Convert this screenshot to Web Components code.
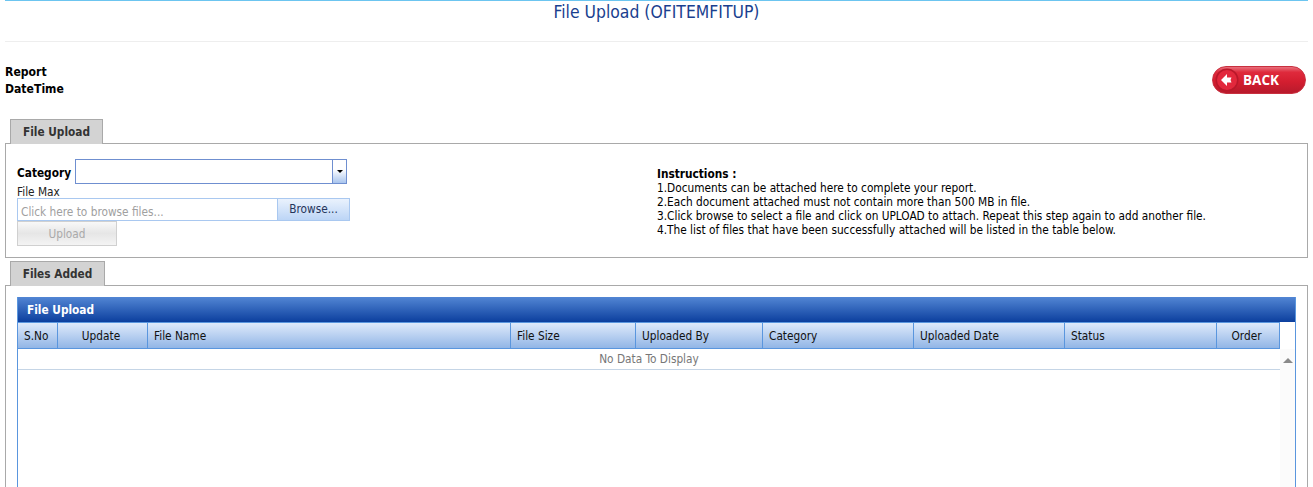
<!DOCTYPE html>
<html>
<head>
<meta charset="utf-8">
<title>File Upload</title>
<style>
  html, body { margin: 0; height: 487px; overflow: hidden; background: #fff; }
  body { padding: 0 5px; font: 11.75px/13px "DejaVu Sans Condensed", "Liberation Sans", sans-serif; color: #000; }
</style>
</head>
<body>
<page-title>File Upload (OFITEMFITUP)</page-title>
<report-head></report-head>
<tab-panel label="File Upload" tabwidth="93" height="115"><upload-form></upload-form></tab-panel>
<tab-panel label="Files Added" tabwidth="95" height="202" gap="3" cut><data-grid title="File Upload"></data-grid></tab-panel>

<script>
class PageTitle extends HTMLElement {
  constructor() {
    super();
    this.attachShadow({ mode: "open" });
    this.shadowRoot.innerHTML = `<style>
      :host { display: block; height: 40px; border-top: 1px solid #6cc5f0; border-bottom: 1px solid #eee; }
      div { text-align: center; color: #1a3f8f; font-size: 17.4px; line-height: 22px; }
    </style><div><slot></slot></div>`;
  }
}
customElements.define("page-title", PageTitle);

class BackButton extends HTMLElement {
  constructor() {
    super();
    this.attachShadow({ mode: "open" });
    this.shadowRoot.innerHTML = `<style>
      :host { display: block; width: 94px; height: 28px; }
      .btn { box-sizing: border-box; height: 28px; border-radius: 14px; display: flex; align-items: center; gap: 4px; padding-left: 2px;
        border: 1px solid #c9303f; background: linear-gradient(#e8707c 0, #df2a3c 20%, #d41e30 55%, #b81a2c 100%); color: #fff;
        font: bold 13.5px "Open Sans", sans-serif; }
      svg { display: block; flex: none; }
    </style>
    <div class="btn">
      <svg width="24" height="24" viewBox="0 0 24 24">
        <circle cx="12" cy="12" r="11.5" fill="#b9182a"/>
        <circle cx="12" cy="12" r="10" fill="#e2283c"/>
        <path d="M6 12 L12 6 V9.5 H16.5 L15.5 12 L16.5 14.5 H12 V18 Z" fill="#fff"/>
      </svg>
      <span>BACK</span>
    </div>`;
  }
}
customElements.define("back-button", BackButton);

class ReportHead extends HTMLElement {
  constructor() {
    super();
    this.attachShadow({ mode: "open" });
    this.shadowRoot.innerHTML = `<style>
      :host { display: flex; justify-content: space-between; height: 77px; }
      .lbl { font-size: 12.1px; font-weight: bold; line-height: 17px; padding-top: 22px; }
      .right { padding: 24px 2px 0 0; }
    </style>
    <div class="lbl">Report<br>DateTime</div>
    <div class="right"><back-button></back-button></div>`;
  }
}
customElements.define("report-head", ReportHead);

class TabPanel extends HTMLElement {
  constructor() {
    super();
    this.attachShadow({ mode: "open" });
  }
  connectedCallback() {
    const label = this.getAttribute("label") || "";
    const tabwidth = this.getAttribute("tabwidth") || "90";
    const height = this.getAttribute("height") || "100";
    const gap = this.getAttribute("gap") || "0";
    // cut: the panel runs on past the fold, so no bottom edge
    const bottom = this.hasAttribute("cut") ? "0" : "1px solid #a9a9a9";
    this.shadowRoot.innerHTML = `<style>
      :host { display: block; margin-top: ${gap}px; }
      .tab { box-sizing: border-box; width: ${tabwidth}px; height: 25px; margin-left: 5px; margin-bottom: -1px; position: relative;
        background: #d3d3d3; border: 1px solid #a9a9a9; border-bottom: 0; color: #333; font-weight: bold;
        text-align: center; line-height: 24px; }
      .body { box-sizing: border-box; width: 1303px; height: ${height}px; border: 1px solid #a9a9a9; border-bottom: ${bottom}; padding: 11px 11px 0; }
    </style>
    <div class="tab">${label}</div>
    <div class="body"><slot></slot></div>`;
  }
}
customElements.define("tab-panel", TabPanel);

class UploadForm extends HTMLElement {
  constructor() {
    super();
    this.attachShadow({ mode: "open" });
    this.shadowRoot.innerHTML = `<style>
      :host { display: grid; grid-template-columns: 640px 1fr; }
      .cat { display: flex; align-items: center; height: 25px; margin-top: 4px; }
      .cat b { width: 58px; flex: none; padding-top: 4px; }
      .select { box-sizing: border-box; width: 272px; height: 25px; border: 1px solid #6f8fd0; display: flex; justify-content: flex-end; background: #fff; }
      .arrow { width: 13px; border-left: 1px solid #6f8fd0; background: linear-gradient(#fff 40%, #a9c5ee); display: flex; align-items: center; justify-content: center; }
      .arrow i { width: 0; height: 0; border: 3px solid transparent; border-top: 3px solid #000; border-bottom: 0; }
      .max { line-height: 16px; margin-bottom: -2px; color: #222; }
      .file { display: flex; box-sizing: border-box; width: 333px; height: 23px; border: 1px solid #a9c8f0; }
      .file .ph { flex: 1; color: #a0a0a0; padding-left: 3px; line-height: 26px; background: #fff; }
      .file .br { width: 71px; border-left: 1px solid #a9c8f0; text-align: center; color: #24345a; line-height: 20px;
        background: linear-gradient(#eaf2fd, #bcd5f6); }
      .up { box-sizing: border-box; width: 100px; height: 25px; border: 1px solid #d0d0d0; color: #aaa; text-align: center; line-height: 24px;
        background: linear-gradient(#f8f8f8, #e6e6e6 50%, #f4f4f4); }
      .info { padding-top: 12px; color: #000; }
      .info b, .info div { display: block; line-height: 14px; }
    </style>
    <div>
      <div class="cat"><b>Category</b><div class="select"><div class="arrow"><i></i></div></div></div>
      <div class="max">File Max</div>
      <div class="file"><div class="ph">Click here to browse files...</div><div class="br">Browse...</div></div>
      <div class="up">Upload</div>
    </div>
    <div class="info">
      <b>Instructions :</b>
      <div>1.Documents can be attached here to complete your report.</div>
      <div>2.Each document attached must not contain more than 500 MB in file.</div>
      <div>3.Click browse to select a file and click on UPLOAD to attach. Repeat this step again to add another file.</div>
      <div>4.The list of files that have been successfully attached will be listed in the table below.</div>
    </div>`;
  }
}
customElements.define("upload-form", UploadForm);

class DataGrid extends HTMLElement {
  constructor() {
    super();
    this.attachShadow({ mode: "open" });
  }
  connectedCallback() {
    const cols = [
      ["S.No", 40, "left"], ["Update", 90, "center"], ["File Name", 363, "left"], ["File Size", 125, "left"],
      ["Uploaded By", 127, "left"], ["Category", 151, "left"], ["Uploaded Date", 151, "left"], ["Status", 152, "left"], ["Order", 63, "center"]
    ];
    const head = cols.map(c => `<div class="th ${c[2]}" style="width:${c[1]}px">${c[0]}</div>`).join("");
    this.shadowRoot.innerHTML = `<style>
      :host { display: block; box-sizing: border-box; width: 1279px; height: 190px; border: 1px solid #5a96de; border-width: 0 1px; }
      .cap { height: 25px; box-sizing: border-box; padding-left: 9px; color: #fff; font-weight: bold; line-height: 27px; background: linear-gradient(#5286d4, #0c3f9e); }
      .head { display: flex; height: 27px; box-sizing: border-box; border-top: 1px solid #5a96de; border-bottom: 1px solid #5a96de; width: 1262px; }
      .th { box-sizing: border-box; border-right: 1px solid #5a96de; padding: 0 6px; line-height: 26px; color: #111; background: linear-gradient(#dfeafb, #92b6e6); }
      .center { text-align: center; padding-right: 9px; }
      .main { display: flex; height: 138px; }
      .rows { width: 1262px; }
      .empty { height: 21px; box-sizing: border-box; border-bottom: 1px solid #c5d5e6; text-align: center; color: #777; line-height: 20px; }
      .scroll { flex: 1; background: #fbfbfb; position: relative; }
      .scroll i { position: absolute; left: 3px; top: 9px; width: 0; height: 0; border: 5px solid transparent; border-bottom: 5px solid #8a8a8a; border-top: 0; }
    </style>
    <div class="cap">${this.getAttribute("title") || ""}</div>
    <div class="head">${head}</div>
    <div class="main"><div class="rows"><div class="empty">No Data To Display</div></div><div class="scroll"><i></i></div></div>`;
  }
}
customElements.define("data-grid", DataGrid);
</script>
</body>
</html>
